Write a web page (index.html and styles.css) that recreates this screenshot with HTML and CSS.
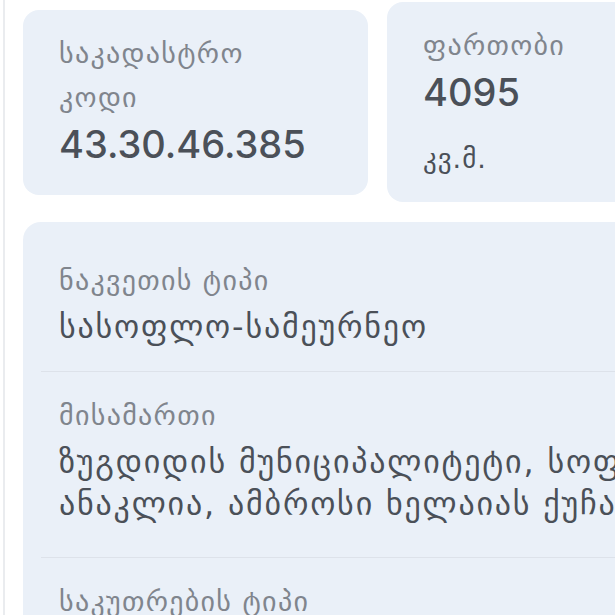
FILE: index.html
```html
<!DOCTYPE html>
<html lang="ka">
<head>
<meta charset="utf-8">
<title>ნაკვეთი</title>
<link rel="stylesheet" href="styles.css">
</head>
<body>
<div class="screen">
  <div class="summary">
    <section class="stat stat-code">
      <div class="stat-label">საკადასტრო კოდი</div>
      <div class="stat-value">43.30.46.385</div>
    </section>
    <section class="stat stat-area">
      <div class="stat-label">ფართობი</div>
      <div class="stat-value">4095</div>
      <div class="stat-unit">კვ.მ.</div>
    </section>
  </div>
  <section class="details">
    <div class="row">
      <div class="row-label">ნაკვეთის ტიპი</div>
      <div class="row-value">სასოფლო-სამეურნეო</div>
    </div>
    <div class="row row-tall">
      <div class="row-label">მისამართი</div>
      <div class="row-value">ზუგდიდის მუნიციპალიტეტი, სოფელი ანაკლია, ამბროსი ხელაიას ქუჩა</div>
    </div>
    <div class="row">
      <div class="row-label">საკუთრების ტიპი</div>
      <div class="row-value">კერძო</div>
    </div>
  </section>
</div>
</body>
</html>
```
FILE: styles.css
```css
html, body {
  margin: 0;
  padding: 0;
  background: #ffffff;
  overflow: hidden;
}

body {
  font-family: "Inter", "DejaVu Sans", sans-serif;
  color: #4b5058;
}

.screen {
  width: 730px;
  margin-left: 3px;
  border-left: 2px solid #eaecef;
  padding: 0 18px;
  min-height: 700px;
}

.summary {
  display: flex;
  align-items: flex-start;
  gap: 19px;
}

.stat {
  width: 345px;
  box-sizing: border-box;
  background: #eaf0f8;
  border-radius: 16px;
  padding: 22px 36px 21px;
}

.stat-code {
  margin-top: 10px;
  padding-bottom: 27px;
}

.stat-area {
  margin-top: 2px;
}

.stat-label {
  font-family: "DejaVu Sans", sans-serif;
  font-size: 28px;
  letter-spacing: 1.3px;
  line-height: 44px;
  color: #80858d;
}

.stat-value {
  font-family: "Inter", "Liberation Sans", sans-serif;
  font-size: 38px;
  line-height: 48px;
  font-weight: 500;
  color: #4b5058;
}

.stat-unit {
  font-family: "DejaVu Sans", sans-serif;
  font-size: 27px;
  letter-spacing: 1px;
  line-height: 44px;
  margin-top: 21px;
  color: #4b5058;
}

.details {
  margin-top: 20px;
  background: #eaf0f8;
  border-radius: 18px;
  padding: 15px 18px 0;
}

.row {
  padding: 26px 18px 23px;
  border-bottom: 1px solid #dde2ea;
}

.row-tall {
  padding-bottom: 32px;
}

.row-label {
  font-family: "DejaVu Sans", sans-serif;
  font-size: 28px;
  letter-spacing: 1.3px;
  line-height: 36px;
  color: #80858d;
}

.row-value {
  font-family: "DejaVu Sans", sans-serif;
  font-size: 32px;
  letter-spacing: 1.8px;
  line-height: 42px;
  margin-top: 7px;
  color: #4b5058;
}
```
